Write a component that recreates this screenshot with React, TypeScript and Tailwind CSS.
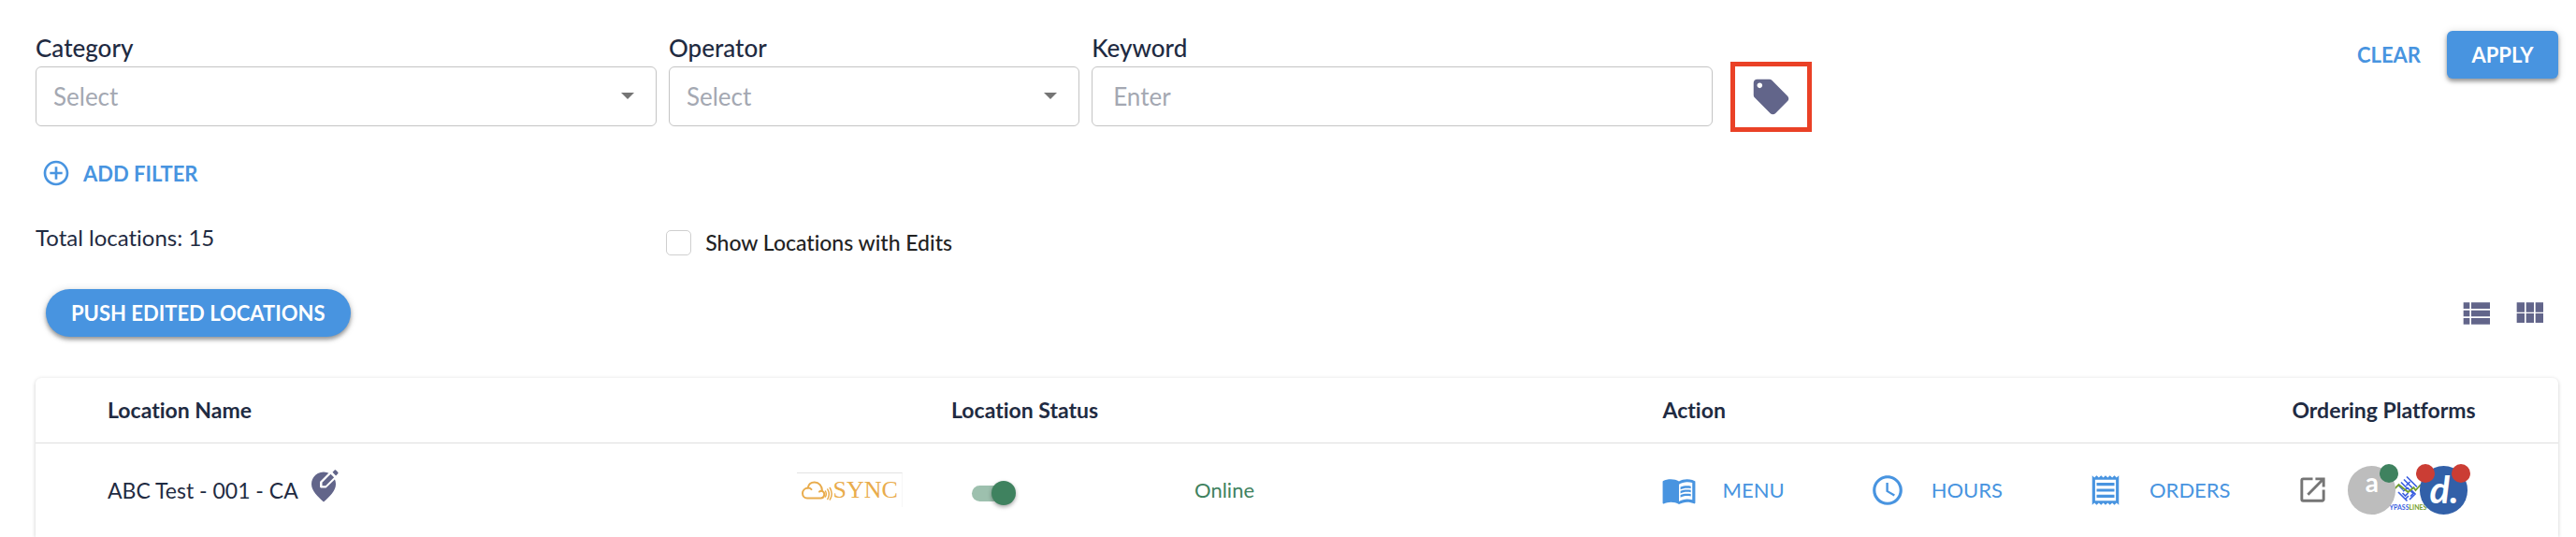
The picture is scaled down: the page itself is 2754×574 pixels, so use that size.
import React from "react";
import { MdAccessTime, MdLocalOffer, MdMenuBook, MdOpenInNew, MdOutlineReceipt, MdAddCircleOutline } from "react-icons/md";

const fieldBox =
  "h-16 w-full rounded-md border border-[#c4c4c4] bg-white text-[26px] text-[#a4a8b2] outline-none placeholder:text-[#a4a8b2] placeholder:opacity-100";

const labelText = "mb-[2px] block text-[26px] leading-[36px] font-medium";

function SelectField({ id, label, className }: { id: string; label: string; className: string }) {
  return (
    <div className={className}>
      <label htmlFor={id} className={labelText}>
        {label}
      </label>
      <div className="relative">
        <select id={id} className={`${fieldBox} appearance-none px-[18px]`}>
          <option>Select</option>
        </select>
        <svg viewBox="0 0 14 7" className="pointer-events-none absolute top-7 right-6 h-[7px] w-[14px]" aria-hidden="true">
          <path d="M0 0h14L7 7z" fill="#757575" />
        </svg>
      </div>
    </div>
  );
}

function EditPin() {
  return (
    <svg viewBox="0 0 29 35" className="h-[35px] w-[29px]" aria-hidden="true">
      <path d="M13 2.5C5.6 2.5 0 8.300 0 15.500c0 7.500 7 13.500 13 19 6-5.500 13-11.500 13-19C26 8.300 20.400 2.500 13 2.500z" fill="#62658a" />
      <path d="M9 18.600V13L21.500.5l7.500 6L15.500 19.500H10z" fill="#fff" />
      <path d="M11.500 17.300v-3.600l9-9 3.600 3.600-9 9z" fill="#62658a" />
      <path d="M22.500 2.800L24.700.6c.4-.4 1-.4 1.400 0l2.200 2.200c.4.4.4 1 0 1.400L26.100 6.400z" fill="#62658a" />
    </svg>
  );
}

function SyncLogo() {
  return (
    <div className="flex h-[37px] w-[113px] items-center border-t border-r border-t-[#e2e2e2] border-r-[#f6f6f6] pl-[5px]">
      <svg viewBox="0 0 33 21" className="h-[21px] w-[33px]" fill="none" stroke="#e9ac4c" strokeWidth="2" strokeLinecap="round" aria-hidden="true">
        <path d="M6 18.500h14.500a4 4 0 0 0 1.500-7.600C22 5.500 18.500 1.500 13.800 1.500 10 1.500 7.300 4 6.600 7.600 3.500 8 1 10.200 1 13.300c0 3 2.200 5.200 5 5.200z" />
        <path d="M6.600 7.600c1.600-.1 3 .5 3.900 1.500M22 10.900c-1.200-.3-2.200 0-3 .7" />
        <path d="M25.500 11c.9 1.700.9 4.300 0 6M27.800 9c1.700 3 1.700 7.500 0 10.500M30.300 7.500c2.200 3.800 2.200 9 0 12.500" strokeWidth="1.500" />
      </svg>
      <span className="font-['Liberation_Serif',serif] text-[26px] leading-none text-[#e9ac4c]">SYNC</span>
    </div>
  );
}

function BypassLogo() {
  return (
    <div className="-mx-[4px] mt-[6px] flex w-[34px] flex-col items-center">
      <svg viewBox="0 0 28 30" className="h-[30px] w-[28px]" fill="none" aria-hidden="true">
        <g stroke="#3b5fe0" strokeWidth="1.700">
          <path d="M13 1.500l11 11M10 4.500l10 10M7 7.500l6 6M4 10.500l5 5M16.500 7l-4 4" />
          <path d="M4 18l9.500 9.500M9 17l5-3.500 6 6-3 3M8.500 19l3 3 3-3M12 25l3-3M16 26l6-6-4-4" />
        </g>
        <path d="M0 14.500l4.500-4.500 10 8 6-5 2 3 5.500-6" stroke="#76a02c" strokeWidth="1.800" />
      </svg>
      <span className="text-[7px] leading-[8px] font-bold whitespace-nowrap text-[#3b5fe0]">
        YPASS<span className="text-[#76a02c]">LINES</span>
      </span>
    </div>
  );
}

const actions = [
  { label: "MENU", Icon: MdMenuBook },
  { label: "HOURS", Icon: MdAccessTime },
  { label: "ORDERS", Icon: MdOutlineReceipt },
];

export default function App() {
  return (
    <main className="flex min-h-screen flex-col overflow-hidden bg-white pr-[19px] pl-[38px] font-['Lato','Inter',sans-serif] text-[#1f2b42] [font-variant-ligatures:no-common-ligatures]">
      <section className="flex items-start pt-[33px]">
        <div className="flex flex-1 items-start gap-[13px]">
          <SelectField id="category" label="Category" className="w-[26.75%]" />
          <SelectField id="operator" label="Operator" className="w-[17.7%]" />
          <div className="w-[26.75%]">
            <label htmlFor="keyword" className={labelText}>
              Keyword
            </label>
            <input id="keyword" type="text" placeholder="Enter" className={`${fieldBox} px-[22px]`} />
          </div>
          <button type="button" aria-label="Tags" className="mt-[33px] ml-[6px] flex h-[75px] w-[87px] shrink-0 items-center justify-center border-[5px] border-[#ea4126]">
            <MdLocalOffer className="size-[45px] text-[#62658a]" />
          </button>
        </div>
        <div className="flex shrink-0 items-center gap-7">
          <button type="button" className="h-[51px] text-[22px] font-bold text-[#4894e0]">CLEAR</button>
          <button type="button" className="h-[51px] w-[119px] rounded-md bg-[#4894e0] text-[22px] font-bold text-white shadow-[0_3px_4px_rgba(0,0,0,0.35),0_1px_9px_rgba(0,0,0,0.15)]">
            APPLY
          </button>
        </div>
      </section>

      <button type="button" className="mt-7 ml-[6px] flex h-8 items-center gap-[13px] self-start text-[22px] font-bold text-[#4894e0]">
        <MdAddCircleOutline className="size-8" />
        ADD FILTER
      </button>

      <div className="mt-[38px] flex items-start">
        <p className="w-1/4 text-[24px] leading-[30px]">Total locations: 15</p>
        <label className="flex items-center gap-[15px] pt-[5px] text-[23px] leading-[30px] font-medium text-[#222]">
          <input type="checkbox" className="size-[27px] appearance-none rounded-[5px] border border-[#cfcfcf]" />
          Show Locations with Edits
        </label>
      </div>

      <div className="mt-[35px] flex items-center justify-between pr-[11px] pl-[11px]">
        <button type="button" className="h-[51px] rounded-full bg-[#4894e0] px-[27px] text-[22px] font-bold text-white shadow-[0_3px_4px_rgba(0,0,0,0.35),0_1px_9px_rgba(0,0,0,0.15)]">
          PUSH EDITED LOCATIONS
        </button>
        <div className="flex gap-[17px] text-[#62658a]">
          <button type="button" aria-label="List view">
            <svg viewBox="0 0 24 24" className="size-10" fill="currentColor">
              <path d="M4 14h4v-4H4v4zm0 5h4v-4H4v4zM4 9h4V5H4v4zm5 5h12v-4H9v4zm0 5h12v-4H9v4zM9 5v4h12V5H9z" />
            </svg>
          </button>
          <button type="button" aria-label="Grid view">
            <svg viewBox="0 0 24 24" className="size-10" fill="currentColor">
              <path d="M4 11.200h5V5H4v6.200zm0 6.800h5v-6H4v6zm6 0h5v-6h-5v6zm6 0h5v-6h-5v6zm-6-6.800h5V5h-5v6.200zM16 5v6.200h5V5h-5z" />
            </svg>
          </button>
        </div>
      </div>

      <section className="mt-11 flex-1 rounded-t-md bg-white shadow-[0_1px_4px_rgba(0,0,0,0.2)]">
        <table className="w-full table-fixed border-collapse text-left">
          <colgroup>
            <col className="w-[30.2%]" />
            <col className="w-[6.1%]" />
            <col className="w-[28.2%]" />
            <col className="w-[24.95%]" />
            <col />
          </colgroup>
          <thead>
            <tr className="h-[69px] border-b border-[#dedede] text-[23px] font-bold">
              <th className="pl-[77px]">Location Name</th>
              <th aria-label="Integration" />
              <th>Location Status</th>
              <th>Action</th>
              <th>Ordering Platforms</th>
            </tr>
          </thead>
          <tbody className="text-[22px]">
            <tr className="h-[101px]">
              <td className="pl-[77px]">
                <div className="flex items-center gap-[14px] text-[23px]">
                  ABC Test - 001 - CA
                  <button type="button" aria-label="Edit location" className="pb-2">
                    <EditPin />
                  </button>
                </div>
              </td>
              <td>
                <SyncLogo />
              </td>
              <td>
                <div className="flex items-center pl-[22px] text-[#3f825f]">
                  <input
                    type="checkbox"
                    role="switch"
                    aria-label="Location online"
                    defaultChecked
                    className="relative mt-2 h-[17px] w-[46px] appearance-none rounded-full bg-[#9dc0ae] before:absolute before:-top-[5px] before:-right-px before:size-[26px] before:rounded-full before:bg-[#3f825f] before:shadow-[0_2px_4px_rgba(0,0,0,0.35)]"
                  />
                  <span className="ml-48">Online</span>
                </div>
              </td>
              <td>
                <div className="-ml-[2px] flex w-[609px] items-center justify-between text-[#4894e0]">
                  {actions.map(({ label, Icon }) => (
                    <button key={label} type="button" className="flex items-center gap-7">
                      <Icon className="size-[38px]" />
                      {label}
                    </button>
                  ))}
                </div>
              </td>
              <td>
                <div className="flex items-center pl-[5px]">
                  <a href="#open" aria-label="Open location" className="mr-5">
                    <MdOpenInNew className="size-[35px] text-[#757575]" />
                  </a>
                  <div className="relative flex h-[52px] w-[51px] justify-center rounded-full bg-[#bdbdbd] text-[28px] leading-[34px] font-bold text-white">
                    a
                    <span className="absolute -top-[2px] -right-[3px] size-5 rounded-full bg-[#3f825f]" />
                  </div>
                  <BypassLogo />
                  <div className="relative flex h-[52px] w-[51px] justify-center rounded-full bg-[#3260a8] text-[40px] leading-[50px] font-bold text-white italic">
                    d.
                    <span className="absolute -top-[2px] -left-[4px] size-5 rounded-full bg-[#cb3d34]" />
                    <span className="absolute -top-[2px] -right-[3px] size-5 rounded-full bg-[#cb3d34]" />
                  </div>
                </div>
              </td>
            </tr>
          </tbody>
        </table>
      </section>
    </main>
  );
}
